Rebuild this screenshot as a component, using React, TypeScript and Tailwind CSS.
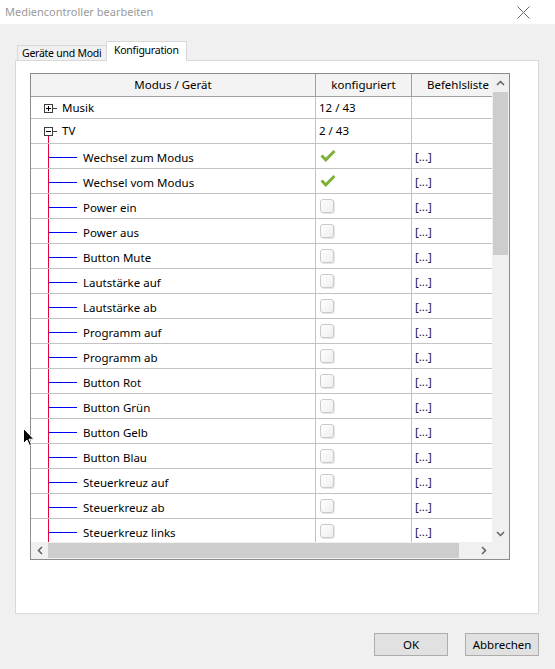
import React from "react";

const CHILDREN: { label: string; done?: boolean }[] = [
  { label: "Wechsel zum Modus", done: true },
  { label: "Wechsel vom Modus", done: true },
  { label: "Power ein" },
  { label: "Power aus" },
  { label: "Button Mute" },
  { label: "Lautstärke auf" },
  { label: "Lautstärke ab" },
  { label: "Programm auf" },
  { label: "Programm ab" },
  { label: "Button Rot" },
  { label: "Button Grün" },
  { label: "Button Gelb" },
  { label: "Button Blau" },
  { label: "Steuerkreuz auf" },
  { label: "Steuerkreuz ab" },
  { label: "Steuerkreuz links" },
];

function ExpandBox({ open, top }: { open: boolean; top: number }) {
  return (
    <div className="absolute left-[13px] flex items-center" style={{ top }}>
      <div className="relative h-[9px] w-[9px] border border-[#3c3c3c] bg-white">
        <div className="absolute left-[1px] top-[3px] h-px w-[5px] bg-black" />
        {!open && <div className="absolute left-[3px] top-[1px] h-[5px] w-px bg-black" />}
      </div>
      <div className="h-px w-[4px] bg-[#3c3c3c]" />
    </div>
  );
}

function Check() {
  return (
    <svg width="16" height="13" viewBox="0 0 16 13" className="block">
      <path d="M1.5 6.5 L5.8 10.8 L14.5 2" fill="none" stroke="#7fb13a" strokeWidth="3" />
    </svg>
  );
}

function Box() {
  return (
    <div className="h-[14px] w-[14px] rounded-[3px] border border-[#cacaca] bg-gradient-to-br from-white to-[#eeeeee] shadow-[1px_1px_0_#e6e6e6]" />
  );
}

function Row({
  h = 25,
  children,
  col2,
  col3,
}: {
  h?: number;
  children: React.ReactNode;
  col2?: React.ReactNode;
  col3?: React.ReactNode;
}) {
  return (
    <div className="flex border-b border-[#c3c3c3]" style={{ height: h }}>
      <div className="relative w-[285px] shrink-0 border-r border-[#c3c3c3]">{children}</div>
      <div className="flex w-[96px] shrink-0 items-center border-r border-[#c3c3c3] pl-[3px]">{col2}</div>
      <div className="flex w-[100px] shrink-0 items-center pl-[3px]">{col3}</div>
    </div>
  );
}

export default function App() {
  return (
    <div className="relative h-[669px] w-[555px] overflow-hidden bg-[#f0f0f0] font-['Noto_Sans',sans-serif] text-[11.5px] text-black">
      {/* title bar */}
      <div className="flex h-[24px] items-center justify-between bg-white pl-[5px] pr-[25px]">
        <span className="text-[11px] text-[#9a9a9a]">Mediencontroller bearbeiten</span>
        <svg width="13" height="13" viewBox="0 0 13 13">
          <path d="M0.5 0.5 L12.5 12.5 M12.5 0.5 L0.5 12.5" stroke="#6b6b6b" strokeWidth="1" />
        </svg>
      </div>

      <div className="px-[15px] pt-[17px]">
        {/* tabs */}
        <div className="relative z-10 -mb-px flex h-[20px] items-end pl-[2px] text-[10.5px] tracking-[-0.25px]">
          <div className="flex h-[16px] w-[89px] items-center whitespace-nowrap border-l border-t border-[#d9d9d9] pl-[4px] leading-none">
            Geräte und Modi
          </div>
          <div className="flex h-[20px] items-start whitespace-nowrap border-x border-t border-[#d9d9d9] bg-white pl-[7px] pr-[7px] pt-[3px] leading-none">
            Konfiguration
          </div>
        </div>

        {/* panel */}
        <div className="h-[554px] w-[524px] border border-[#d9d9d9] bg-white pl-[14px] pt-[12px]">
          <div className="flex h-[487px] w-[480px] flex-col border border-[#8c8c8c]">
            <div className="flex h-[468px]">
              {/* content */}
              <div className="h-[468px] w-[461px] overflow-hidden">
                <div className="flex h-[23px] border-b border-[#a0a0a0] bg-[#f3f3f3]">
                  <div className="flex w-[285px] shrink-0 items-center justify-center border-r border-[#a0a0a0]">
                    Modus / Gerät
                  </div>
                  <div className="flex w-[96px] shrink-0 items-center justify-center border-r border-[#a0a0a0]">
                    konfiguriert
                  </div>
                  <div className="flex w-[80px] shrink-0 items-center justify-end pr-[3px]">Befehlsliste</div>
                </div>

                <Row h={22} col2="12 / 43">
                  <ExpandBox open={false} top={7} />
                  <span className="absolute left-[31px] top-[2px]">Musik</span>
                </Row>
                <Row col2="2 / 43">
                  <ExpandBox open top={8} />
                  <div className="absolute bottom-0 left-[17px] top-[17px] w-px bg-[#e8003a]" />
                  <span className="absolute left-[31px] top-[3px]">TV</span>
                </Row>
                {CHILDREN.map((c) => (
                  <Row
                    key={c.label}
                    col2={
                      <div className="self-start pl-px pt-[5px]">
                        {c.done ? <Check /> : <Box />}
                      </div>
                    }
                    col3={<span className="pt-[2px] text-[#1e1446]">[...]</span>}
                  >
                    <div className="absolute bottom-0 left-[17px] top-0 w-px bg-[#e8003a]" />
                    <div className="absolute left-[18px] top-[13px] h-px w-[28px] bg-[#0000ff]" />
                    <span className="absolute left-[52px] top-[5px]">{c.label}</span>
                  </Row>
                ))}
              </div>

              {/* vertical scrollbar */}
              <div className="flex w-[17px] flex-col bg-[#f0f0f0]">
                <div className="flex h-[18px] items-center justify-center">
                  <svg width="9" height="6" viewBox="0 0 9 6">
                    <path d="M1 5 L4.5 1.5 L8 5" fill="none" stroke="#606060" strokeWidth="1.5" />
                  </svg>
                </div>
                <div className="mx-px h-[163px] bg-[#cdcdcd]" />
                <div className="flex-1" />
                <div className="flex h-[17px] items-center justify-center">
                  <svg width="9" height="6" viewBox="0 0 9 6">
                    <path d="M1 1 L4.5 4.5 L8 1" fill="none" stroke="#606060" strokeWidth="1.5" />
                  </svg>
                </div>
              </div>
            </div>

            {/* horizontal scrollbar */}
            <div className="flex h-[17px] bg-[#f0f0f0]">
              <div className="flex w-[17px] items-center justify-center">
                <svg width="6" height="9" viewBox="0 0 6 9">
                  <path d="M5 1 L1.5 4.5 L5 8" fill="none" stroke="#606060" strokeWidth="1.5" />
                </svg>
              </div>
              <div className="my-px w-[411px] bg-[#cdcdcd]" />
              <div className="flex-1" />
              <div className="flex w-[17px] items-center justify-center">
                <svg width="6" height="9" viewBox="0 0 6 9">
                  <path d="M1 1 L4.5 4.5 L1 8" fill="none" stroke="#606060" strokeWidth="1.5" />
                </svg>
              </div>
              <div className="w-[17px]" />
            </div>
          </div>
        </div>

        {/* buttons */}
        <div className="mt-[19px] flex justify-end gap-[17px] pr-[1px]">
          <button className="h-[23px] w-[74px] border border-[#adadad] bg-[#e1e1e1] text-[11.5px]">OK</button>
          <button className="h-[23px] w-[74px] border border-[#adadad] bg-[#e1e1e1] text-[11.5px]">Abbrechen</button>
        </div>
      </div>

      {/* mouse cursor */}
      <svg className="absolute left-[23px] top-[428px]" width="12" height="19" viewBox="0 0 12 19">
        <path d="M0.5 0.5 L0.5 15.5 L4 12 L6.5 17.5 L8.5 16.5 L6 11.2 L10.8 11.2 Z" fill="#000" stroke="#fff" strokeWidth="1" />
      </svg>
    </div>
  );
}
